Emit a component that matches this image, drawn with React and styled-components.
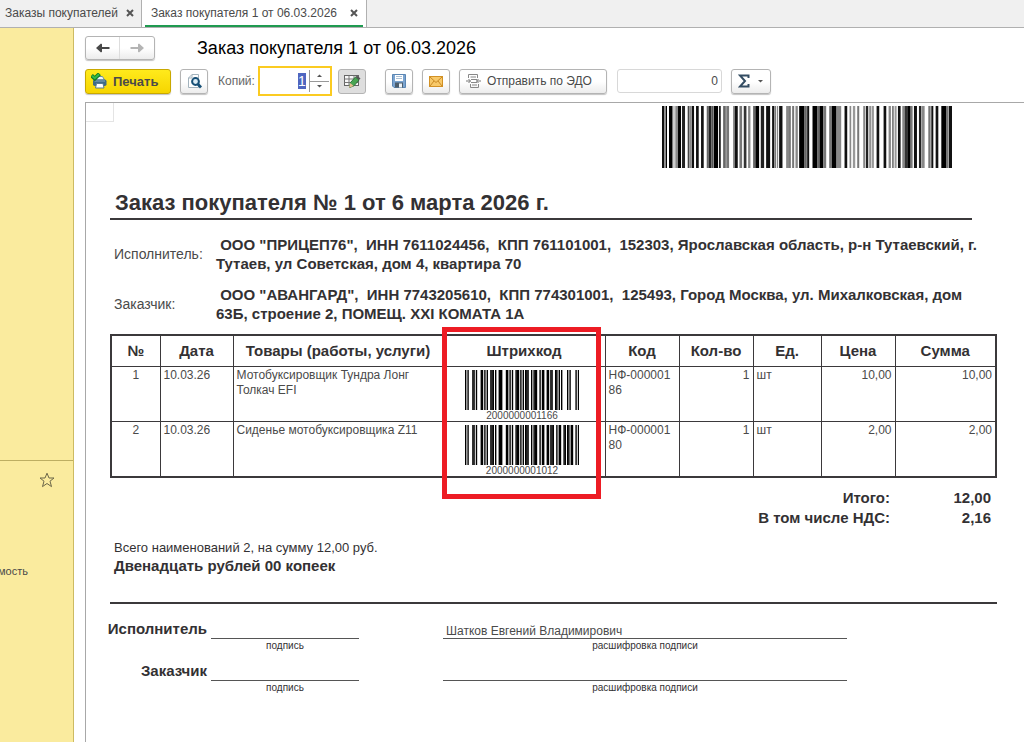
import { useEffect, useRef } from "react";
import styled, { createGlobalStyle, css } from "styled-components";

const GlobalStyle = createGlobalStyle`
  :root {
    --color-text: #4a4a4a;
    --color-ink: #333133;
    --color-line: #3b393b;
    --color-border: #b4b4b4;
    --color-sidebar: #faeb9e;
    --color-green: #1f9a50;
    --color-red: #ed1c24;
  }
  * {
    box-sizing: border-box;
  }
  body {
    margin: 0;
    background-color: #fff;
    color: var(--color-text);
    font-family: "Liberation Sans", Arial, sans-serif;
    font-size: 12px;
  }
  button,
  input {
    font: inherit;
    color: inherit;
  }
`;

const Window = styled.div`
  display: flex;
  flex-direction: column;
  min-height: 100vh;
`;

const TabBar = styled.nav`
  display: flex;
  height: 28px;
  background-color: #f0f0f0;
  border-bottom: 1px solid #b0b0b0;
`;

const Tab = styled.div`
  display: flex;
  align-items: center;
  gap: 8px;
  padding: 0 7px 2px 5px;
  border-right: 1px solid #b0b0b0;
  ${(props) =>
    props.$active &&
    css`
      background-color: #fff;
      padding: 0 3px 0 3px;
    `}
`;

const TabLabel = styled.a`
  color: inherit;
  text-decoration: none;
  white-space: nowrap;
`;

const TabInner = styled.div`
  display: flex;
  align-items: center;
  gap: 13px;
  height: 26px;
  padding: 0 5px 0 6px;
  border-bottom: 2px solid var(--color-green);
`;

const CloseButton = styled.button`
  display: flex;
  padding: 0;
  border: none;
  background: none;
`;

const Body = styled.div`
  display: flex;
  flex: 1;
`;

const Sidebar = styled.aside`
  display: flex;
  flex-direction: column;
  width: 74px;
  background-color: var(--color-sidebar);
  border-right: 1px solid #cdbb62;
`;

const SidebarTop = styled.div`
  height: 433px;
  border-bottom: 1px solid #bdae62;
`;

const StarButton = styled.button`
  display: flex;
  align-self: flex-end;
  margin: 11px 18px 0 0;
  padding: 0;
  border: none;
  background: none;
`;

const SidebarLink = styled.a`
  display: flex;
  justify-content: flex-end;
  width: 28px;
  margin-top: 77px;
  color: inherit;
  font-size: 11px;
  text-decoration: none;
`;

const Main = styled.main`
  display: flex;
  flex: 1;
  flex-direction: column;
  min-width: 0;
  padding: 8px 0 0 11px;
`;

const TitleRow = styled.header`
  display: flex;
  align-items: center;
  gap: 42px;
  height: 24px;
`;

const Title = styled.h1`
  margin: 0;
  color: #000;
  font-size: 18px;
  font-weight: 400;
`;

const raised = css`
  border: 1px solid var(--color-border);
  border-radius: 3px;
  background: linear-gradient(#fff 50%, #ececec);
  box-shadow: 0 1px 1px #c4c4c4;
`;

const NavGroup = styled.div`
  display: flex;
  height: 24px;
  ${raised}
`;

const NavButton = styled.button`
  display: flex;
  align-items: center;
  justify-content: center;
  width: 34px;
  padding: 0;
  border: none;
  background: none;
  &:not(:last-child) {
    border-right: 1px solid #ddd;
  }
`;

const Toolbar = styled.div`
  display: flex;
  align-items: center;
  height: 30px;
  margin-top: 6px;
`;

const ToolGroup = styled.div`
  display: flex;
  align-items: center;
  gap: ${(props) => props.$gap || 9}px;
  margin-right: ${(props) => props.$space || 0}px;
`;

const ToolButton = styled.button`
  display: flex;
  align-items: center;
  justify-content: center;
  gap: 6px;
  min-width: 28px;
  height: 25px;
  padding: 0 4px;
  white-space: nowrap;
  ${raised}
  ${(props) =>
    props.$primary &&
    css`
      justify-content: flex-start;
      width: 86px;
      padding: 0 5px;
      border-color: #c9a800;
      background: linear-gradient(#ffea1c, #f6d500);
      font-size: 13px;
      font-weight: 700;
    `}
  ${(props) =>
    props.$pressed &&
    css`
      background: #dedede;
      box-shadow: none;
    `}
`;

const SendButton = styled(ToolButton)`
  justify-content: flex-start;
  width: 148px;
  padding: 0 6px;
`;

const SumButton = styled(ToolButton)`
  width: 40px;
  gap: 8px;
`;

const CopiesLabel = styled.label`
  color: #666;
`;

const Spinner = styled.div`
  display: flex;
  width: 74px;
  height: 30px;
  border: 2px solid #fbcb21;
  background-color: #fff;
`;

const CopiesInput = styled.input`
  flex: 1;
  min-width: 0;
  padding: 0 3px 0 0;
  border: none;
  outline: none;
  background: none;
  font-size: 14px;
  text-align: right;
  &::selection {
    background-color: #4f66c0;
    color: #fff;
  }
`;

const Steps = styled.div`
  display: flex;
  flex-direction: column;
  width: 20px;
  margin: 2px 1px 2px 0;
  border-left: 1px solid #999;
`;

const StepButton = styled.button`
  display: flex;
  flex: 1;
  align-items: center;
  justify-content: center;
  padding: 0;
  border: none;
  background: none;
  &:first-child {
    border-bottom: 1px solid #999;
  }
`;

const TotalInput = styled.input`
  width: 105px;
  height: 24px;
  padding: 0 3px;
  border: 1px solid #d8d8d8;
  border-radius: 3px;
  text-align: right;
`;

const Sheet = styled.section`
  flex: 1;
  margin-top: 6px;
  border: 1px solid #a8a8a8;
  border-width: 1px 0 0 1px;
`;

const SheetTop = styled.div`
  display: flex;
  justify-content: space-between;
`;

const CornerCell = styled.div`
  width: 28px;
  height: 19px;
  border: 1px solid #e4e4e4;
  border-width: 0 1px 1px 0;
`;

const OrderBarcode = styled.svg`
  width: 290px;
  height: 62px;
  margin: 3px 72px 0 0;
`;

const Document = styled.article`
  padding: 0 27px 20px 24px;
  color: var(--color-ink);
`;

const DocumentTitle = styled.h2`
  margin: 20px 25px 0 0;
  padding-left: 5px;
  border-bottom: 2px solid var(--color-line);
  font-size: 22px;
  line-height: 30px;
`;

const Parties = styled.dl`
  display: grid;
  grid-template-columns: 106px 1fr;
  gap: 12px 0;
  align-items: center;
  margin: 15px 0 11px;
  font-size: 15px;
  line-height: 19px;
`;

const PartyName = styled.dt`
  padding-left: 4px;
  color: var(--color-text);
  font-size: 14px;
`;

const PartyDetails = styled.dd`
  margin: 0;
  font-weight: 700;
  white-space: pre-wrap;
`;

const Items = styled.table`
  width: 100%;
  table-layout: fixed;
  border-collapse: collapse;
  border: 2px solid var(--color-line);
`;

const Col = styled.col`
  width: ${(props) => props.$width};
`;

const HeadCell = styled.th`
  position: relative;
  height: 31px;
  padding: 0;
  border: 1px solid var(--color-line);
  font-size: 15px;
`;

const Cell = styled.td`
  height: 55px;
  padding: 1px 3px 0;
  border: 1px solid var(--color-line);
  color: var(--color-text);
  line-height: 15px;
  text-align: ${(props) => props.$align || "left"};
  vertical-align: top;
  overflow-wrap: anywhere;
`;

const Highlight = styled.div`
  position: absolute;
  top: -9px;
  left: -2px;
  right: 4px;
  height: 172px;
  border: 5px solid var(--color-red);
`;

const ItemBarcode = styled.figure`
  display: flex;
  flex-direction: column;
  align-items: center;
  margin: 2px 4px 0 0;
`;

const ItemBars = styled.svg`
  width: 114px;
  height: 40px;
`;

const BarcodeText = styled.figcaption`
  font-size: 10px;
  line-height: 11px;
`;

const Totals = styled.dl`
  display: grid;
  grid-template-columns: 1fr 101px;
  margin: 10px 6px 0 0;
  font-size: 15px;
  font-weight: 700;
  line-height: 20px;
  text-align: right;
`;

const TotalValue = styled.dd`
  margin: 0;
`;

const Summary = styled.div`
  margin-top: 11px;
  padding: 0 0 27px 4px;
  border-bottom: 2px solid var(--color-line);
`;

const SummaryText = styled.p`
  margin: 0;
  font-size: ${(props) => (props.$strong ? "15px" : "13px")};
  font-weight: ${(props) => (props.$strong ? 700 : 400)};
  line-height: 18px;
`;

const Signatures = styled.div`
  display: flex;
  flex-direction: column;
  gap: 9px;
  margin-top: 15px;
`;

const Signature = styled.div`
  display: grid;
  grid-template-columns: 97px 148px 76px 404px;
  column-gap: 4px;
`;

const SignatureRole = styled.div`
  display: flex;
  justify-content: flex-end;
  font-size: 15px;
  font-weight: 700;
  line-height: 20px;
  white-space: nowrap;
`;

const SignatureField = styled.div`
  font-size: 10px;
  line-height: 13px;
  text-align: center;
  &:last-child {
    grid-column: 4;
  }
`;

const SignatureLine = styled.div`
  height: 20px;
  padding-left: 3px;
  border-bottom: 1px solid #555;
  color: var(--color-text);
  font-size: 12px;
  line-height: 24px;
  text-align: left;
`;

// [x, width, colour]
const ORDER_BARS = [
  [0, 7, "#111"], [7, 5, "#888"], [12, 3, "#000"], [21, 11, "#000"],
  [32, 8, "#ccc"], [40, 8, "#888"], [48, 9, "#000"], [60, 9, "#222"],
  [77, 5, "#444"], [82, 6, "#888"], [89, 7, "#111"], [102, 8, "#111"],
  [117, 8, "#111"], [134, 6, "#666"], [140, 8, "#222"], [148, 6, "#555"],
  [155, 13, "#000"], [171, 5, "#111"], [184, 4, "#222"], [188, 6, "#888"],
  [194, 7, "#777"], [213, 5, "#888"], [218, 9, "#111"], [232, 8, "#777"],
  [245, 8, "#333"], [258, 7, "#888"], [273, 7, "#666"], [280, 11, "#000"],
  [296, 10, "#222"], [312, 12, "#111"], [330, 6, "#111"], [337, 4, "#555"],
  [344, 4, "#888"], [351, 10, "#111"], [372, 9, "#888"], [382, 3, "#111"],
  [390, 6, "#777"], [400, 7, "#888"], [411, 16, "#000"], [427, 7, "#666"],
  [435, 6, "#111"], [451, 15, "#000"], [466, 6, "#666"], [472, 11, "#000"],
  [483, 9, "#777"], [501, 8, "#777"], [509, 14, "#000"], [523, 14, "#888"],
  [547, 8, "#111"], [562, 5, "#888"], [572, 7, "#999"], [585, 6, "#777"],
  [603, 6, "#888"], [611, 7, "#222"], [621, 5, "#888"], [628, 7, "#999"],
  [643, 8, "#111"], [664, 8, "#111"], [679, 7, "#888"], [690, 4, "#555"],
  [697, 6, "#999"], [707, 8, "#111"], [720, 7, "#888"], [727, 10, "#333"],
  [737, 8, "#000"], [745, 6, "#777"], [755, 9, "#111"], [770, 7, "#222"],
  [778, 9, "#888"], [798, 7, "#777"], [807, 6, "#111"], [820, 8, "#111"],
  [837, 14, "#000"], [851, 8, "#777"], [860, 9, "#111"],
];

const LEFT_ODD = [
  "0001101", "0011001", "0010011", "0111101", "0100011",
  "0110001", "0101111", "0111011", "0110111", "0001011",
];
const PARITY = [
  "LLLLLL", "LLGLGG", "LLGGLG", "LLGGGL", "LGLLGG",
  "LGGLLG", "LGGGLL", "LGLGLG", "LGLGGL", "LGGLGL",
];

const invert = (bits) => bits.replace(/./g, (bit) => (bit === "0" ? "1" : "0"));
const reverse = (bits) => bits.split("").reverse().join("");

function encodeEan13(code) {
  const [first, ...digits] = code.split("").map(Number);
  const left = digits.slice(0, 6).map((digit, i) => {
    const bits = LEFT_ODD[digit];
    return PARITY[first][i] === "L" ? bits : reverse(invert(bits));
  });
  const right = digits.slice(6).map((digit) => invert(LEFT_ODD[digit]));
  return `101${left.join("")}01010${right.join("")}101`;
}

const items = [
  {
    date: "10.03.26",
    name: "Мотобуксировщик Тундра Лонг Толкач EFI",
    barcode: "2000000001166",
    code: "НФ-00000186",
    price: "10,00",
    sum: "10,00",
  },
  {
    date: "10.03.26",
    name: "Сиденье мотобуксировщика Z11",
    barcode: "2000000001012",
    code: "НФ-00000180",
    price: "2,00",
    sum: "2,00",
  },
];

const columnWidths = ["49px", "73px", "auto", "162px", "74px", "74px", "68px", "74px", "101px"];

function CloseIcon() {
  return (
    <svg width="8" height="8" viewBox="0 0 8 8">
      <path d="M1 1l6 6M7 1L1 7" stroke="#555" strokeWidth="2" />
    </svg>
  );
}

function ArrowIcon({ back }) {
  return (
    <svg width="14" height="10" viewBox="0 0 14 10">
      <path
        d={
          back
            ? "M0 5L5 0.500L6 1.200V3.900H13.500V6.100H6V8.800L5 9.500Z"
            : "M14 5L9 0.500L8 1.200V3.900H0.500V6.100H8V8.800L9 9.500Z"
        }
        fill={back ? "#484848" : "#b4b4b4"}
      />
    </svg>
  );
}

function StarIcon() {
  return (
    <svg width="16" height="16" viewBox="0 0 16 16">
      <path
        d="M8 1.200L10 6H15L11 9.200L12.500 14.600L8 11.500L3.500 14.600L5 9.200L1 6H6Z"
        fill="none"
        stroke="#6b6648"
      />
    </svg>
  );
}

function PrinterIcon() {
  return (
    <svg width="16" height="16" viewBox="0 0 16 16">
      <path d="M6 3.500H11.500L13.500 7H5Z" fill="#eef5f9" stroke="#6d8fa3" />
      <rect x="2" y="6.500" width="13.500" height="6.500" rx="1.800" fill="#3f6a86" />
      <path d="M3.500 8H14" stroke="#86a9bd" />
      <path d="M5.500 10.500H12L13 15H4.500Z" fill="#fff" stroke="#587b8f" />
      <path d="M0.500 2.500L3.800 5.500L8.500 0.800" fill="none" stroke="#127a26" strokeWidth="4" />
      <path d="M1 2.700L3.800 5.200L8 1.200" fill="none" stroke="#35bb46" strokeWidth="2" />
    </svg>
  );
}

function PreviewIcon() {
  return (
    <svg width="16" height="16" viewBox="0 0 16 16">
      <path d="M2.500 14.500V5L6 1.500H12.500V14.500Z" fill="#fff" stroke="#a3b3bd" />
      <path d="M2.500 5H6V1.500" fill="none" stroke="#a3b3bd" />
      <circle cx="9.500" cy="8.500" r="3.400" fill="#dcecf5" stroke="#175077" strokeWidth="2" />
      <path d="M11.800 11L15 14.500" stroke="#175077" strokeWidth="2.800" />
    </svg>
  );
}

function EditTableIcon() {
  return (
    <svg width="18" height="16" viewBox="0 0 18 16">
      <rect x="1.500" y="2.500" width="14" height="10" fill="#f8f8f8" stroke="#666" />
      <path d="M1.500 6H15.500M1.500 9.500H15.500M6 2.500V12.500M11 2.500V12.500" stroke="#777" />
      <path d="M6.500 14.500L7.500 9.500L12.500 4L16 7L11 12.800Z" fill="#48a552" stroke="#2d743a" />
      <path d="M6 14.800L7.200 10L10.700 13Z" fill="#e6bd91" />
      <path d="M12.500 4L14 2.500L17.500 5.500L16 7Z" fill="#555" />
    </svg>
  );
}

function SaveIcon() {
  return (
    <svg width="14" height="14" viewBox="0 0 14 14">
      <path d="M0.500 0.500H13.500V13.500H2L0.500 12Z" fill="#7ba4d0" stroke="#5b86b3" />
      <rect x="3" y="1" width="8" height="6" fill="#fff" />
      <path d="M4 2.500H10M4 4.500H10" stroke="#abc0d4" />
      <rect x="3" y="8.500" width="8" height="5" fill="#4d5e6c" />
      <rect x="7" y="9.500" width="3" height="4" fill="#eef3f7" />
    </svg>
  );
}

function MailIcon() {
  return (
    <svg width="14" height="11" viewBox="0 0 14 11">
      <rect x="0.500" y="0.500" width="13" height="10" fill="#f8c969" stroke="#d29125" />
      <path d="M1 1L7 6.500L13 1M1 10L5 5M13 10L9 5" fill="none" stroke="#c98924" />
    </svg>
  );
}

function SendIcon() {
  return (
    <svg width="15" height="14" viewBox="0 0 15 14">
      <path d="M2.500 4V0.500H11.500V4M4.500 10V13.500H12.500V10" fill="none" stroke="#888" />
      <path d="M4.500 3H10M5 5.500H11M5 8.500H11M6 11H11" stroke="#888" />
      <path d="M0 7H4.500M10.500 7H15" stroke="#777" />
      <path d="M2.500 5L4.500 7L2.500 9M12.500 5L10.500 7L12.500 9" fill="none" stroke="#777" />
    </svg>
  );
}

function SumIcon() {
  return (
    <svg width="12" height="14" viewBox="0 0 12 14">
      <path
        d="M10.500 4V1.500H2L7 7L2 12.500H10.500V10"
        fill="none"
        stroke="#344d63"
        strokeWidth="2"
      />
    </svg>
  );
}

function Triangle({ up }) {
  return (
    <svg width="5" height="3" viewBox="0 0 5 3">
      <path d={up ? "M0 3L2.500 0.500L5 3Z" : "M0 0L2.500 2.500L5 0Z"} fill="#555" />
    </svg>
  );
}

function Barcode({ value }) {
  return (
    <ItemBarcode>
      <ItemBars viewBox="0 0 95 40" preserveAspectRatio="none">
        {encodeEan13(value)
          .split("")
          .map((bit, i) =>
            bit === "1" ? <rect key={i} x={i} width="1.150" height="40" fill="#000" /> : null
          )}
      </ItemBars>
      <BarcodeText>{value}</BarcodeText>
    </ItemBarcode>
  );
}

function PrintToolbar() {
  const copies = useRef(null);

  useEffect(() => {
    copies.current.focus();
    copies.current.select();
  }, []);

  return (
    <Toolbar>
      <ToolGroup $space={10}>
        <ToolButton $primary>
          <PrinterIcon />
          Печать
        </ToolButton>
        <ToolButton aria-label="Просмотр">
          <PreviewIcon />
        </ToolButton>
      </ToolGroup>
      <ToolGroup $space={3}>
        <CopiesLabel htmlFor="copies">Копий:</CopiesLabel>
      </ToolGroup>
      <ToolGroup $gap={6} $space={19}>
        <Spinner>
          <CopiesInput id="copies" ref={copies} defaultValue="1" />
          <Steps>
            <StepButton aria-label="Больше">
              <Triangle up />
            </StepButton>
            <StepButton aria-label="Меньше">
              <Triangle />
            </StepButton>
          </Steps>
        </Spinner>
        <ToolButton $pressed aria-label="Редактирование">
          <EditTableIcon />
        </ToolButton>
      </ToolGroup>
      <ToolGroup $space={10}>
        <ToolButton aria-label="Сохранить">
          <SaveIcon />
        </ToolButton>
        <ToolButton aria-label="Отправить по почте">
          <MailIcon />
        </ToolButton>
        <SendButton>
          <SendIcon />
          Отправить по ЭДО
        </SendButton>
      </ToolGroup>
      <ToolGroup>
        <TotalInput aria-label="Сумма" defaultValue="0" />
        <SumButton aria-label="Показатель">
          <SumIcon />
          <Triangle />
        </SumButton>
      </ToolGroup>
    </Toolbar>
  );
}

function ItemsTable() {
  return (
    <Items>
      <colgroup>
        {columnWidths.map((width, i) => (
          <Col key={i} $width={width} />
        ))}
      </colgroup>
      <thead>
        <tr>
          <HeadCell>№</HeadCell>
          <HeadCell>Дата</HeadCell>
          <HeadCell>Товары (работы, услуги)</HeadCell>
          <HeadCell>
            Штрихкод
            <Highlight />
          </HeadCell>
          <HeadCell>Код</HeadCell>
          <HeadCell>Кол-во</HeadCell>
          <HeadCell>Ед.</HeadCell>
          <HeadCell>Цена</HeadCell>
          <HeadCell>Сумма</HeadCell>
        </tr>
      </thead>
      <tbody>
        {items.map((item, i) => (
          <tr key={item.barcode}>
            <Cell $align="center">{i + 1}</Cell>
            <Cell>{item.date}</Cell>
            <Cell>{item.name}</Cell>
            <Cell>
              <Barcode value={item.barcode} />
            </Cell>
            <Cell>{item.code}</Cell>
            <Cell $align="right">1</Cell>
            <Cell>шт</Cell>
            <Cell $align="right">{item.price}</Cell>
            <Cell $align="right">{item.sum}</Cell>
          </tr>
        ))}
      </tbody>
    </Items>
  );
}

function SignatureRow({ role, name }) {
  return (
    <Signature>
      <SignatureRole>{role}</SignatureRole>
      <SignatureField>
        <SignatureLine />
        подпись
      </SignatureField>
      <SignatureField>
        <SignatureLine>{name}</SignatureLine>
        расшифровка подписи
      </SignatureField>
    </Signature>
  );
}

function App() {
  return (
    <Window>
      <GlobalStyle />
      <TabBar>
        <Tab>
          <TabLabel href="#orders">Заказы покупателей</TabLabel>
          <CloseButton aria-label="Закрыть">
            <CloseIcon />
          </CloseButton>
        </Tab>
        <Tab $active>
          <TabInner>
            <TabLabel href="#order">Заказ покупателя 1 от 06.03.2026</TabLabel>
            <CloseButton aria-label="Закрыть">
              <CloseIcon />
            </CloseButton>
          </TabInner>
        </Tab>
      </TabBar>
      <Body>
        <Sidebar>
          <SidebarTop />
          <StarButton aria-label="В избранное">
            <StarIcon />
          </StarButton>
          <SidebarLink href="#cost">мость</SidebarLink>
        </Sidebar>
        <Main>
          <TitleRow>
            <NavGroup>
              <NavButton aria-label="Назад">
                <ArrowIcon back />
              </NavButton>
              <NavButton aria-label="Вперед">
                <ArrowIcon />
              </NavButton>
            </NavGroup>
            <Title>Заказ покупателя 1 от 06.03.2026</Title>
          </TitleRow>
          <PrintToolbar />
          <Sheet>
            <SheetTop>
              <CornerCell />
              <OrderBarcode viewBox="0 0 869 62" preserveAspectRatio="none">
                {ORDER_BARS.map(([x, width, fill]) => (
                  <rect key={x} x={x} width={width} height="62" fill={fill} />
                ))}
              </OrderBarcode>
            </SheetTop>
            <Document>
              <DocumentTitle>Заказ покупателя № 1 от 6 марта 2026 г.</DocumentTitle>
              <Parties>
                <PartyName>Исполнитель:</PartyName>
                <PartyDetails>
                  {
                    '\u00a0ООО "ПРИЦЕП76",  ИНН 7611024456,  КПП 761101001,  152303, Ярославская область, р-н Тутаевский, г. Тутаев, ул Советская, дом 4, квартира 70'
                  }
                </PartyDetails>
                <PartyName>Заказчик:</PartyName>
                <PartyDetails>
                  {
                    '\u00a0ООО "АВАНГАРД",  ИНН 7743205610,  КПП 774301001,  125493, Город Москва, ул. Михалковская, дом 63Б, строение 2, ПОМЕЩ. XXI КОМАТА 1А'
                  }
                </PartyDetails>
              </Parties>
              <ItemsTable />
              <Totals>
                <dt>Итого:</dt>
                <TotalValue>12,00</TotalValue>
                <dt>В том числе НДС:</dt>
                <TotalValue>2,16</TotalValue>
              </Totals>
              <Summary>
                <SummaryText>Всего наименований 2, на сумму 12,00 руб.</SummaryText>
                <SummaryText $strong>Двенадцать рублей 00 копеек</SummaryText>
              </Summary>
              <Signatures>
                <SignatureRow role="Исполнитель" name="Шатков Евгений Владимирович" />
                <SignatureRow role="Заказчик" />
              </Signatures>
            </Document>
          </Sheet>
        </Main>
      </Body>
    </Window>
  );
}

export default App;
